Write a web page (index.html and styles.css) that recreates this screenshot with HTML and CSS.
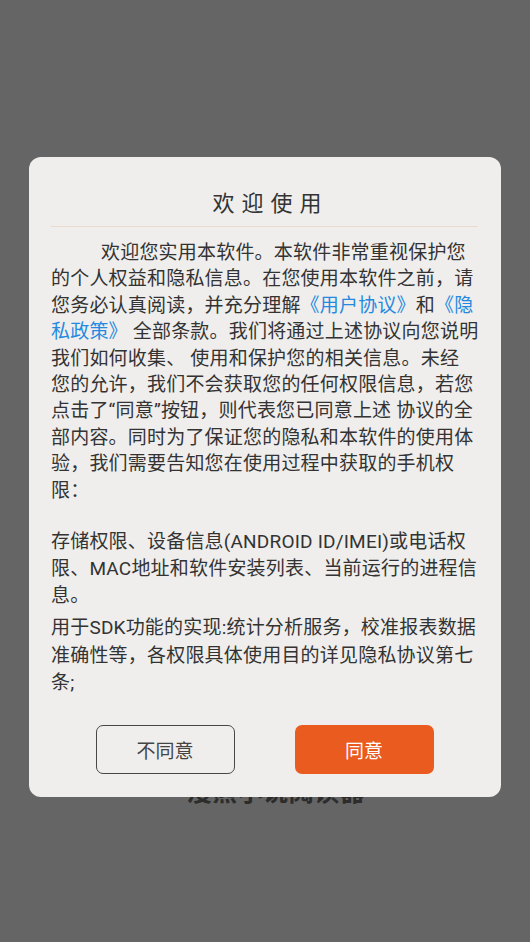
FILE: index.html
```html
<!DOCTYPE html>
<html lang="zh-CN">
<head>
<meta charset="utf-8">
<title>欢迎使用</title>
<link rel="stylesheet" href="styles.css">
</head>
<body>
<div class="splash">
  <div class="app-name">漫熊小说阅读器</div>
</div>
<div class="overlay">
  <div class="dialog">
    <div class="title">欢迎使用</div>
    <div class="divider"></div>
    <p class="para para-main">欢迎您实用本软件。本软件非常重视保护您<br>的个人权益和隐私信息。在您使用本软件之前，请<br>您务必认真阅读，并充分理解<span class="link">《用户协议》</span>和<span class="link">《隐<br>私政策》</span> 全部条款。我们将通过上述协议向您说明<br>我们如何收集、 使用和保护您的相关信息。未经<br>您的允许，我们不会获取您的任何权限信息，若您<br>点击了“同意”按钮，则代表您已同意上述 协议的全<br>部内容。同时为了保证您的隐私和本软件的使用体<br>验，我们需要告知您在使用过程中获取的手机权<br>限：</p>
    <p class="para para-perm">存储权限、设备信息(ANDROID ID/IMEI)或电话权<br>限、MAC地址和软件安装列表、当前运行的进程信<br>息。</p>
    <p class="para para-sdk">用于SDK功能的实现:统计分析服务，校准报表数据<br>准确性等，各权限具体使用目的详见隐私协议第七<br>条;</p>
    <div class="actions">
      <button class="btn btn-decline">不同意</button>
      <button class="btn btn-agree">同意</button>
    </div>
  </div>
</div>
</body>
</html>
```

FILE: styles.css
```css
html, body {
  margin: 0;
  padding: 0;
}
body {
  width: 530px;
  height: 942px;
  background: #656565;
  overflow: hidden;
  font-family: Roboto, "Noto Sans CJK SC", sans-serif;
}
.splash {
  padding-top: 778px;
  padding-left: 22px;
  text-align: center;
}
.app-name {
  font-size: 25px;
  line-height: 30px;
  font-weight: bold;
  color: #2c2c2c;
  letter-spacing: 0.5px;
}
.overlay {
  position: fixed;
  left: 0;
  top: 0;
  width: 530px;
  height: 942px;
  display: flex;
  justify-content: center;
  align-items: flex-start;
  padding-top: 157px;
  box-sizing: border-box;
}
.dialog {
  width: 472px;
  box-sizing: border-box;
  background: #efeeec;
  border-radius: 12px;
  padding: 0 23px 23px 22px;
  color: #333333;
}
.title {
  margin-top: 32px;
  font-size: 22px;
  line-height: 30px;
  letter-spacing: 7px;
  padding-left: 12px;
  text-align: center;
  color: #333333;
}
.divider {
  height: 1px;
  background: #e9dacd;
  margin-top: 7px;
  margin-bottom: 13px;
}
.para {
  margin: 0;
  font-size: 19px;
  letter-spacing: 0.2px;
  white-space: nowrap;
}
.para-main {
  line-height: 26.4px;
  text-indent: 50px;
}
.para-perm {
  line-height: 27px;
  margin-top: 24px;
}
.para-sdk {
  line-height: 27.5px;
  margin-top: 5px;
}
.link {
  color: #2589e0;
}
.actions {
  display: flex;
  justify-content: center;
  gap: 60px;
  margin-top: 28px;
}
.btn {
  width: 139px;
  height: 49px;
  box-sizing: border-box;
  border-radius: 7px;
  font-family: Roboto, "Noto Sans CJK SC", sans-serif;
  font-size: 19px;
  padding: 0;
  cursor: pointer;
}
.btn-decline {
  background: transparent;
  border: 1.5px solid #474747;
  color: #444444;
}
.btn-agree {
  background: #e95b1f;
  border: none;
  color: #ffffff;
}
```
